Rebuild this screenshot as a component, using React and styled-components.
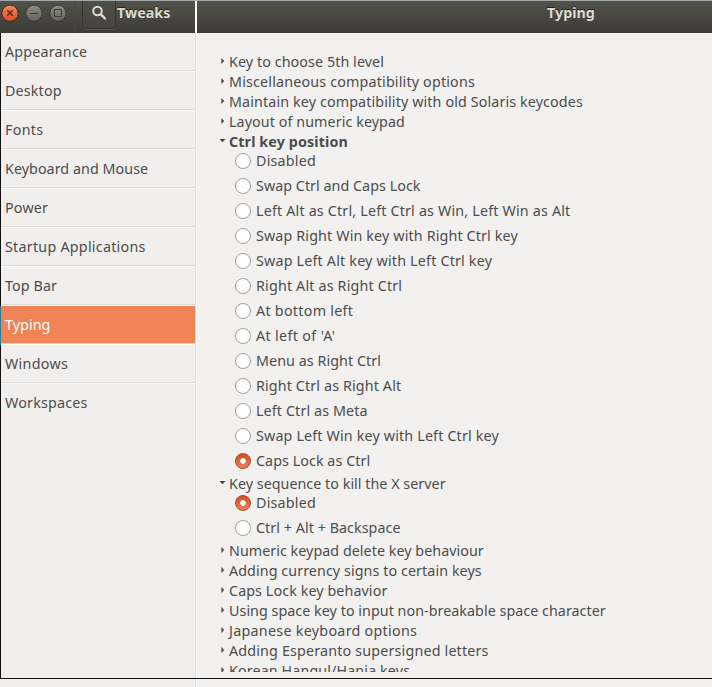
import React from "react";
import styled, { createGlobalStyle, css } from "styled-components";

const Global = createGlobalStyle`
  * { box-sizing: border-box; }
  body { margin: 0; background: #f2f1f0; overflow: hidden; }
`;

const Page = styled.div`
  width: 712px;
  height: 687px;
  display: flex;
  flex-direction: column;
  font-family: "Noto Sans", sans-serif;
  font-size: 14.3px;
  color: #4c4c4c;
  background: linear-gradient(to right, #f0efed 195px, #dcdad9 195px 196px, #fcfcfc 196px 197px, #f2f1f0 197px);
  overflow: hidden;
`;

const HeaderBar = styled.header`
  flex: none;
  height: 33px;
  display: flex;
  border-top: 1px solid #a3a9ac;
  background: linear-gradient(#535249, #3c3b37);
  color: #dfdbd2;
  font-weight: 700;
  text-shadow: 0 -1px 0 #24231f;
`;

const HeaderLeft = styled.div`
  width: 197px;
  display: flex;
  align-items: flex-start;
  border-right: 2px solid #fcfcfc;
`;

const HeaderTitle = styled.div`
  line-height: 24px;
  white-space: nowrap;
`;

const HeaderRight = styled.div`
  flex: 1;
  padding-left: 350px;
`;

const WindowButtons = styled.div`
  display: flex;
  width: 75px;
  height: 32px;
  border-right: 1px solid #48473f;

  svg { display: block; flex: none; }
`;

const SearchButton = styled.div`
  width: 34px;
  height: 28px;
  margin: 0 1px 0 7px;
  display: flex;
  justify-content: center;
  border: 1px solid #35342f;
  border-top: 0;
  border-radius: 0 0 4px 4px;
  background: linear-gradient(#4f4e46, #45443e);
  box-shadow: 0 1px 0 #59584f;
`;

const Body = styled.div`
  flex: none;
  height: 646px;
  display: flex;
  border-bottom: 1px solid #101010;
`;

const Sidebar = styled.nav`
  width: 195px;
  border-left: 1px solid #101010;
`;

const SideRow = styled.div`
  height: 39px;
  padding-left: 4px;
  line-height: 38px;
  white-space: nowrap;
  letter-spacing: ${(p) => p.$spacing || 0}px;
  border-bottom: 1px solid #fbfbfb;
  box-shadow: inset 0 -1px 0 #dcdad9;
  &:last-child { border-color: transparent; box-shadow: none; }
  ${(p) => p.$selected && css`
    color: #fff;
    background: #f08457;
    background-clip: padding-box;
    box-shadow: inset 0 -1px 0 #dcdad9, -1px 0 0 #1e7f9e;
  `}
`;

const Content = styled.main`
  flex: 1;
  height: 639px;
  padding: 19px 0 0 24px;
  overflow: hidden;
`;

const ExpanderRow = styled.div`
  height: 20px;
  display: flex;
  align-items: center;
  white-space: nowrap;
  font-weight: ${(p) => (p.$bold ? 700 : 400)};
  svg { flex: none; }
`;

const Label = styled.span`
  line-height: 18px;
  white-space: nowrap;
  letter-spacing: ${(p) => p.$spacing || 0}px;
`;

const RadioGroup = styled.div`
  display: grid;
  gap: 7px;
  padding: 0 0 4px 16px;
`;

const RadioRow = styled.div`
  height: 18px;
  display: flex;
  align-items: center;
  gap: 5px;
`;

const Radio = styled.span`
  flex: none;
  width: 16px;
  height: 16px;
  border-radius: 50%;
  border: 1px solid ${(p) => (p.$on ? "#b5451c" : "#a09f9c")};
  background: ${(p) => (p.$on
    ? "radial-gradient(circle, #fff 2.4px, transparent 3.2px), linear-gradient(#cf4f20, #e8845c)"
    : "#fff")};
`;

const Arrow = ({ open }) => (
  <svg width="10" height="16" viewBox="0 0 10 16">
    <path d={open ? "M0.5 5H6.5L3.5 8.3Z" : "M2.4 4V10L5.2 7Z"} fill="#454545" />
  </svg>
);

const sections = [
  ["Key to choose 5th level", 0.08],
  ["Miscellaneous compatibility options", 0.17],
  ["Maintain key compatibility with old Solaris keycodes", 0.12],
  ["Layout of numeric keypad", 0.08],
  ["Ctrl key position", 0.12, [
    ["Disabled", 0.2],
    ["Swap Ctrl and Caps Lock", 0.04],
    ["Left Alt as Ctrl, Left Ctrl as Win, Left Win as Alt", 0.18],
    ["Swap Right Win key with Right Ctrl key", 0.14],
    ["Swap Left Alt key with Left Ctrl key", 0.19],
    ["Right Alt as Right Ctrl", 0.17],
    ["At bottom left", 0.28],
    ["At left of 'A'", 0.35],
    ["Menu as Right Ctrl", 0.06],
    ["Right Ctrl as Right Alt", 0.13],
    ["Left Ctrl as Meta", 0.12],
    ["Swap Left Win key with Left Ctrl key", 0.16],
    ["Caps Lock as Ctrl", 0.06, true],
  ], true],
  ["Key sequence to kill the X server", 0.03, [
    ["Disabled", 0.2, true],
    ["Ctrl + Alt + Backspace", 0.05],
  ]],
  ["Numeric keypad delete key behaviour", 0.04],
  ["Adding currency signs to certain keys", 0.08],
  ["Caps Lock key behavior", 0.09],
  ["Using space key to input non-breakable space character", 0.04],
  ["Japanese keyboard options", 0.28],
  ["Adding Esperanto supersigned letters", 0.17],
  ["Korean Hangul/Hanja keys", 0.12],
];

const pages = [
  ["Appearance", 0.2], ["Desktop", 0.15], ["Fonts", 0.3], ["Keyboard and Mouse", 0.05], ["Power", 0.2],
  ["Startup Applications", 0.25], ["Top Bar", 0.1], ["Typing", 0.05], ["Windows", 0.3], ["Workspaces", 0.2],
];

const Controls = () => (
  <svg width="74" height="26" viewBox="0 1 74 26">
    <defs>
      <linearGradient id="close" x2="0" y2="1"><stop stopColor="#f68562" /><stop offset="1" stopColor="#e2501f" /></linearGradient>
      <linearGradient id="plain" x2="0" y2="1"><stop stopColor="#8d8c84" /><stop offset="1" stopColor="#66655d" /></linearGradient>
    </defs>
    <circle cx="10" cy="13.2" r="8.2" fill="url(#close)" stroke="#32312c" />
    <circle cx="34" cy="13.2" r="8.2" fill="url(#plain)" stroke="#32312c" />
    <circle cx="58" cy="13.2" r="8.2" fill="url(#plain)" stroke="#32312c" />
    <path d="M7.2 10.2L12.8 15.8M12.8 10.2L7.2 15.8" stroke="#47291d" strokeWidth="1.3" />
    <path d="M30 13.5H38M54.5 9.5H61.5V16.5H54.5Z" fill="none" stroke="#3c3b37" />
  </svg>
);

export default function App() {
  return (
    <Page>
      <Global />
      <HeaderBar>
        <HeaderLeft>
          <WindowButtons><Controls /></WindowButtons>
          <SearchButton>
            <svg width="16" height="24" viewBox="0 0 16 24">
              <circle cx="6.5" cy="10" r="4.3" fill="none" stroke="#dfdbd2" strokeWidth="2" />
              <path d="M9.7 13.2L14 17.5" stroke="#dfdbd2" strokeWidth="2.4" strokeLinecap="round" />
            </svg>
          </SearchButton>
          <HeaderTitle>Tweaks</HeaderTitle>
        </HeaderLeft>
        <HeaderRight><HeaderTitle>Typing</HeaderTitle></HeaderRight>
      </HeaderBar>
      <Body>
        <Sidebar>
          {pages.map(([name, spacing]) => (
            <SideRow key={name} $spacing={spacing} $selected={name === "Typing"}>{name}</SideRow>
          ))}
        </Sidebar>
        <Content>
          {sections.map(([title, spacing, options, bold]) => (
            <React.Fragment key={title}>
              <ExpanderRow $bold={bold}>
                <Arrow open={!!options} />
                <Label $spacing={spacing}>{title}</Label>
              </ExpanderRow>
              {options && (
                <RadioGroup>
                  {options.map(([text, gap, on]) => (
                    <RadioRow key={text}>
                      <Radio $on={on} />
                      <Label $spacing={gap}>{text}</Label>
                    </RadioRow>
                  ))}
                </RadioGroup>
              )}
            </React.Fragment>
          ))}
        </Content>
      </Body>
    </Page>
  );
}
